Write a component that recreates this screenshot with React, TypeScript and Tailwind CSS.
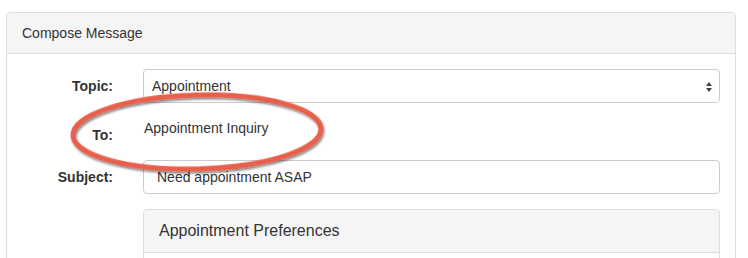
import React from "react";

export default function App() {
  return (
    <div
      className="w-[748px] h-[258px] overflow-hidden bg-white pt-[12px] pl-[6px] pr-[12px] text-[14px] text-[#333]"
      style={{ fontFamily: '"Liberation Sans", Arial, sans-serif' }}
    >
      <div className="relative rounded-t-[4px] border border-[#ddd] h-[300px]">
        <div className="h-[41px] bg-[#f5f5f5] border-b border-[#ddd] rounded-t-[4px] px-[15px] flex items-center leading-[20px]">
          Compose Message
        </div>
        <div className="pt-[15px] pr-[15px]">
          <div className="flex h-[34px]">
            <div className="w-[106px] text-right font-bold pt-[7px] leading-[20px]">Topic:</div>
            <div className="flex-1 ml-[30px] relative h-[34px] border border-[#ccc] rounded-[4px] flex items-center pl-[8px] leading-[20px]">
              Appointment
              <svg className="absolute right-[6px] top-[11px]" width="8" height="12" viewBox="0 0 8 12">
                <path d="M4 1 L7 5 L1 5 Z" fill="#444" />
                <path d="M4 11 L7 7 L1 7 Z" fill="#444" />
              </svg>
            </div>
          </div>
          <div className="flex h-[28px] mt-[15px]">
            <div className="w-[106px] text-right font-bold pt-[7px] leading-[20px]">To:</div>
            <div className="flex-1 ml-[31px] leading-[20px]">Appointment Inquiry</div>
          </div>
          <div className="flex h-[34px] mt-[14px]">
            <div className="w-[106px] text-right font-bold pt-[7px] leading-[20px]">Subject:</div>
            <div className="flex-1 ml-[30px] h-[34px] border border-[#ccc] rounded-[4px] flex items-center pl-[13px] leading-[20px]">
              Need appointment ASAP
            </div>
          </div>
          <div className="ml-[136px] mt-[15px] border border-[#ddd] rounded-t-[4px]">
            <div className="h-[43px] bg-[#f5f5f5] border-b border-[#ddd] rounded-t-[4px] px-[15px] flex items-center text-[16px] leading-[22px]">
              Appointment Preferences
            </div>
            <div className="h-[40px]" />
          </div>
        </div>
        <svg
          className="absolute pointer-events-none"
          style={{ left: 60, top: 70 }}
          width="280"
          height="100"
          viewBox="0 0 280 100"
        >
          <defs>
            <filter id="sh" x="-10%" y="-20%" width="120%" height="150%">
              <feDropShadow dx="1" dy="2" stdDeviation="1.3" floodColor="#000" floodOpacity="0.5" />
            </filter>
          </defs>
          <ellipse
            cx="130"
            cy="49"
            rx="124"
            ry="37"
            fill="none"
            stroke="#e8604c"
            strokeWidth="5"
            filter="url(#sh)"
            transform="rotate(-1.5 130 49)"
          />
        </svg>
      </div>
    </div>
  );
}
